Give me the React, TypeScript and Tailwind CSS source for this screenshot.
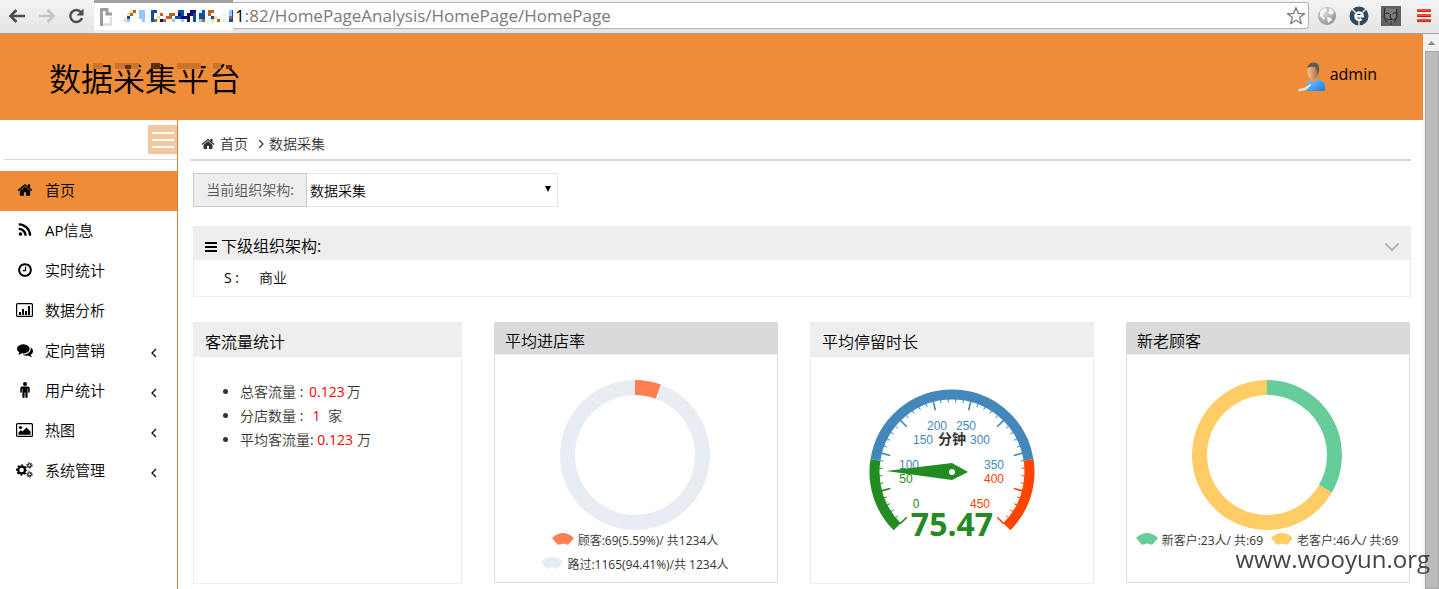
import type { ReactNode } from "react";

const HOME =
  "M1472 992v480q0 26-19 45t-45 19h-384v-384h-256v384h-384q-26 0-45-19t-19-45v-480q0-1 .5-3t.5-3l575-474 575 474q1 2 1 6zm223-69l-62 74q-8 9-21 11h-3q-13 0-21-7l-692-577-692 577q-12 8-24 7-13-2-21-11l-62-74q-8-10-7-23.5t11-21.5l719-599q32-26 76-26t76 26l244 204v-195q0-14 9-23t23-9h192q14 0 23 9t9 23v408l219 182q10 8 11 21.5t-7 23.5z";
const RSS =
  "M576 1344q0 80-56 136t-136 56-136-56-56-136 56-136 136-56 136 56 56 136zm512 123q2 28-17 48-18 21-47 21h-135q-25 0-43-16.5t-20-41.5q-22-229-184.5-391.5t-391.5-184.5q-25-2-41.5-20t-16.5-43v-135q0-29 21-47 17-17 43-17h5q160 13 306 80.5t259 181.5q114 113 181.5 259t80.5 306zm512 2q2 27-18 47-18 20-46 20h-143q-26 0-44.5-17.5t-19.5-42.5q-12-215-101-408.5t-231.5-336-336-231.5-408.5-102q-25-1-42.5-19.5t-17.5-43.5v-143q0-28 20-46 18-18 44-18h3q262 13 501.5 120t425.5 294q187 186 294 425.5t120 501.5z";
const CLOCK =
  "M1024 544v448q0 14-9 23t-23 9h-320q-14 0-23-9t-9-23v-64q0-14 9-23t23-9h224v-352q0-14 9-23t23-9h64q14 0 23 9t9 23zm416 352q0-148-73-273t-198-198-273-73-273 73-198 198-73 273 73 273 198 198 273 73 273-73 198-198 73-273zm224 0q0 209-103 385.5t-279.5 279.5-385.5 103-385.5-103-279.5-279.5-103-385.5 103-385.5 279.5-279.5 385.5-103 385.5 103 279.5 279.5 103 385.5z";
const COMMENTS =
  "M1408 768q0 139-94 257t-256.5 186.5-353.5 68.5q-86 0-176-16-124 88-278 128-36 9-86 16h-3q-11 0-20.5-8t-11.5-21q-1-3-1-6.5t.5-6.5 2-6l2.5-5 3.5-5.5 4-5 4.5-5 4-4.5q5-6 23-25t26-29.5 22.5-29 25-38.5 20.5-44q-124-72-195-177t-71-224q0-139 94-257t256.5-186.5 353.5-68.5 353.5 68.5 256.5 186.5 94 257zm384 256q0 120-71 224.5t-195 176.5q10 24 20.5 44t25 38.5 22.5 29 26 29.5 23 25q1 1 4 4.5t4.5 5 4 5 3.5 5.5l2.5 5 2 6 .5 6.5-1 6.5q-3 14-13 22t-22 7q-50-7-86-16-154-40-278-128-90 16-176 16-271 0-472-132 58 4 88 4 161 0 309-45t264-129q125-92 192-212t67-254q0-77-23-152 129 71 204 178t75 230z";

function Glyph({ d, className }: { d: string; className: string }) {
  return (
    <svg viewBox="0 0 1792 1792" fill="currentColor" className={className} aria-hidden="true">
      <path d={d} />
    </svg>
  );
}

function BarChart() {
  return (
    <svg viewBox="0 0 17 14" className="h-3.5 w-[17px]" aria-hidden="true">
      <rect x="0.6" y="0.6" width="15.8" height="12.8" rx="1" fill="none" stroke="currentColor" strokeWidth="1.2" />
      <path d="M3 9h2v3H3zM6 6h2v6H6zM9 8h2v4H9zM12 3h2v9h-2z" fill="currentColor" />
    </svg>
  );
}

function Picture() {
  return (
    <svg viewBox="0 0 17 14" className="h-3.5 w-[17px]" aria-hidden="true">
      <rect x="0.6" y="0.6" width="15.8" height="12.8" rx="1" fill="none" stroke="currentColor" strokeWidth="1.2" />
      <circle cx="4.5" cy="4.5" r="1.6" fill="currentColor" />
      <path d="M2.500 11.800V9.500L5 7l1.500 1.500L10.500 4.500l4 4v3.300z" fill="currentColor" />
    </svg>
  );
}

function Person() {
  return (
    <svg viewBox="0 0 10 16" className="h-4 w-2.5" fill="currentColor" aria-hidden="true">
      <circle cx="5" cy="2.1" r="2" />
      <path d="M2 4.6h6A1.7 1.7 0 0 1 9.7 6.3v3.6a.8.8 0 0 1-1.6 0V6.8h-.5v8.1a.9.9 0 0 1-2.2 0v-4.4h-.8v4.4a.9.9 0 0 1-2.2 0V6.8h-.5v3.1a.8.8 0 0 1-1.6 0V6.3A1.7 1.7 0 0 1 2 4.6z" />
    </svg>
  );
}

function Cogs() {
  return (
    <svg viewBox="0 0 17 16" className="h-4 w-[17px]" fill="none" stroke="currentColor" aria-hidden="true">
      <circle cx="5.6" cy="8" r="3.400" strokeWidth="2.200" />
      <circle cx="5.6" cy="8" r="4.900" strokeWidth="1.500" strokeDasharray="2 1.850" strokeDashoffset="1" />
      <circle cx="13.500" cy="3.400" r="1.700" strokeWidth="1.100" />
      <circle cx="13.500" cy="3.400" r="2.700" strokeWidth="1" strokeDasharray="1.400 1.430" />
      <circle cx="13.500" cy="12.400" r="1.700" strokeWidth="1.100" />
      <circle cx="13.500" cy="12.400" r="2.700" strokeWidth="1" strokeDasharray="1.400 1.430" />
    </svg>
  );
}

type Item = { label: string; icon: ReactNode; active?: boolean; nested?: boolean };

const MENU: Item[] = [
  { label: "首页", icon: <Glyph d={HOME} className="size-4" />, active: true },
  { label: "AP信息", icon: <Glyph d={RSS} className="size-4" /> },
  { label: "实时统计", icon: <Glyph d={CLOCK} className="size-4" /> },
  { label: "数据分析", icon: <BarChart /> },
  { label: "定向营销", icon: <Glyph d={COMMENTS} className="size-4" />, nested: true },
  { label: "用户统计", icon: <Person />, nested: true },
  { label: "热图", icon: <Picture />, nested: true },
  { label: "系统管理", icon: <Cogs />, nested: true },
];

const MOSAIC_COLORS = ["#fff", "#0a4fa3", "#8fc9ff", "#b5651d", "#10106a", "#d5f8ff", "#f5d9a8", "#3b8fd6"];
const MOSAIC = [
  "0063022001100000001100440510330000021",
  "0630022001003003304104410110300005021",
  "0100022001060033011444010110016000031",
  "6200002001304300200204010230060305011",
];

function Mosaic() {
  return (
    <svg viewBox="0 0 111 12" className="mb-0.5 h-3 w-[111px] shrink-0" shapeRendering="crispEdges" aria-hidden="true">
      {MOSAIC.flatMap((row, y) =>
        row.split("").map((c, x) => (
          <rect key={`${x}-${y}`} x={x * 3} y={y * 3} width="3" height="3" fill={MOSAIC_COLORS[Number(c)]} />
        )),
      )}
    </svg>
  );
}

function BrowserBar() {
  return (
    <div className="flex h-[34px] items-center border-b border-[#a3a3a3] bg-gradient-to-b from-[#f4f4f4] to-[#e4e4e4] pl-2">
      <button aria-label="Back" className="flex h-full w-[30px] items-center pb-0.5">
        <svg viewBox="0 0 18 16" className="h-4 w-[18px]" fill="none" stroke="#4d4d4d" strokeWidth="2.6">
          <path d="M17 8H3M8.5 2L2.5 8l6 6" />
        </svg>
      </button>
      <button aria-label="Forward" className="flex h-full w-[30px] items-center pb-0.5">
        <svg viewBox="0 0 18 16" className="h-4 w-[18px]" fill="none" stroke="#c4c4c4" strokeWidth="2.6">
          <path d="M1 8h14M9.5 2l6 6-6 6" />
        </svg>
      </button>
      <button aria-label="Reload" className="flex h-full w-[26px] items-center pb-0.5">
        <svg viewBox="0 0 16 16" className="size-4" fill="none" stroke="#4d4d4d" strokeWidth="2.4">
          <path d="M13 4.2A6 6 0 1 0 14 10" />
          <path d="M15.500 0.500v7h-7z" fill="#4d4d4d" stroke="none" />
        </svg>
      </button>
      <div className="flex h-full w-[139px] shrink-0 items-center gap-3 border-b-[3px] border-t-[3px] border-b-[#efefef] border-t-[#a0a0a0] bg-white pl-1.5">
        <svg viewBox="0 0 12 18" className="h-[18px] w-3 shrink-0" fill="none" aria-hidden="true">
          <path d="M1.500 18V1.500H7V6h5" stroke="#9c9c9c" strokeWidth="3" />
          <path d="M3 16.500h8V9" stroke="#dedede" strokeWidth="2.500" />
        </svg>
        <Mosaic />
      </div>
      <div className="mb-0.5 flex h-[27px] min-w-0 flex-1 items-center rounded-r-[3px] border border-l-0 border-[#b3b3b3] bg-white pr-0.5">
        <span className="min-w-0 flex-1 truncate pl-0.5 text-[17px] leading-6 text-[#7a7a7a]">
          <span className="text-black">1</span>:82/HomePageAnalysis/HomePage/HomePage
        </span>
        <button aria-label="Bookmark">
          <svg viewBox="0 0 20 20" className="size-5" fill="none" stroke="#7d7d7d" strokeWidth="1.300" strokeLinejoin="round">
            <path d="M10 1.500l2.300 6 6.200.2-4.900 3.900 1.800 6.200L10 14.300l-5.400 3.500 1.800-6.200L1.500 7.700l6.200-.2z" />
          </svg>
        </button>
      </div>
      <div className="mb-0.5 flex shrink-0 items-center gap-3 px-2">
        <svg viewBox="0 0 20 20" className="size-5" aria-hidden="true">
          <defs>
            <radialGradient id="globe" cx="0.35" cy="0.3" r="0.8">
              <stop offset="0" stopColor="#d8d8d8" />
              <stop offset="1" stopColor="#8e8e8e" />
            </radialGradient>
          </defs>
          <circle cx="10" cy="10" r="9" fill="url(#globe)" />
          <path d="M3 6q3-4 6-4l1 3-3 2-1 3 2 2-1 2-4-4zM12 2q4 1 5 5l-3 2-3-2 1-2zM10 11l4 1 1 2-4 3z" fill="#f4f4f4" />
        </svg>
        <svg viewBox="0 0 20 20" className="size-5" aria-hidden="true">
          <circle cx="10" cy="10" r="9.500" fill="#2d4a5e" />
          <path d="M6.300 10.200h7.400a3.700 3.700 0 1 0-1.200 2.800" fill="none" stroke="#fff" strokeWidth="2.400" />
          <path d="M3 3l3.500 3.500M17 3l-3.500 3.500M10 15v5" stroke="#fff" strokeWidth="1.200" />
        </svg>
        <svg viewBox="0 0 20 20" className="size-5" aria-hidden="true">
          <path d="M0 0h20v20H0z" fill="#626262" />
          <path d="M4 2q-1 9 6 17 6-7 5-16" fill="#7c7c7c" />
          <path d="M4.500 7.500q2-1.500 4 .5M11.500 8q2-2 4-1M9.500 8l-.5 4 2 .5M5.500 12q1.500 3 4.500 1.500 3 1.500 4.500-1.500M10 15v4M4 2L3 11l3 5M15.500 3l.5 8-3 5" fill="none" stroke="#252525" strokeWidth="1" />
        </svg>
        <button aria-label="Menu" className="ml-1">
          <svg viewBox="0 0 14 14" className="size-3.5" aria-hidden="true">
            <path d="M0 0h14v3H0zM0 5h14v3H0zM0 10h14v3H0z" fill="#ee4b40" />
            <path d="M0 2h14v1H0zM0 7h14v1H0zM0 12h14v1H0z" fill="#c9211a" />
          </svg>
        </button>
      </div>
    </div>
  );
}

function Avatar() {
  return (
    <svg viewBox="0 0 28 30" className="h-[30px] w-7" aria-hidden="true">
      <defs>
        <linearGradient id="shirt" x1="0" y1="0" x2="1" y2="1">
          <stop offset="0" stopColor="#8cc4f2" />
          <stop offset="0.600" stopColor="#3f9cf5" />
          <stop offset="1" stopColor="#1479e8" />
        </linearGradient>
        <linearGradient id="skin">
          <stop offset="0" stopColor="#f6c79c" />
          <stop offset="1" stopColor="#a8693a" />
        </linearGradient>
      </defs>
      <path d="M8 29q-1-8 5-12h7q8 2 7 10 0 2-3 2z" fill="url(#shirt)" />
      <path d="M12 15h7v3l-3 3-4-3z" fill="#d99a65" />
      <ellipse cx="15" cy="9.500" rx="5.500" ry="8" fill="url(#skin)" />
      <path d="M9.500 6q1-6 7-5.500Q22 1 21 9.500L19.500 13q0-5-2.500-8-4-1-7.500 1z" fill="#5b5b55" />
      <path d="M0 27l6-1 6-4 1.500 1L8 28l-7 1.500z" fill="#dbe4ee" />
    </svg>
  );
}

function polar(cx: number, cy: number, r: number, deg: number) {
  const a = (deg * Math.PI) / 180;
  return [cx + r * Math.sin(a), cy - r * Math.cos(a)];
}

function arc(cx: number, cy: number, r: number, from: number, to: number) {
  const [x1, y1] = polar(cx, cy, r, from);
  const [x2, y2] = polar(cx, cy, r, to);
  return `M${x1} ${y1}A${r} ${r} 0 ${to - from > 180 ? 1 : 0} 1 ${x2} ${y2}`;
}

function Donut({ share, color, rest }: { share: number; color: string; rest: string }) {
  return (
    <svg viewBox="0 0 150 150" className="size-[150px]" fill="none" strokeWidth="15" role="img">
      <path d={arc(75, 75, 67.5, share * 360, 360)} stroke={rest} />
      <path d={arc(75, 75, 67.5, 0, share * 360)} stroke={color} />
    </svg>
  );
}

function Legend({ color, children }: { color: string; children: ReactNode }) {
  return (
    <div className="flex h-6 items-center gap-1 whitespace-nowrap pb-0.5 text-xs text-[#333]">
      <svg viewBox="0 0 22 12" className="mb-1 h-3 w-[22px] shrink-0" aria-hidden="true">
        <path d="M0 5Q11-5 22 5l-6 7q-1-1-2.500-.5-2.500-2-5 0Q7 11 6 12z" fill={color} />
      </svg>
      <span>{children}</span>
    </div>
  );
}

const BLUE = "#4488bb";
const GREEN = "#228b22";
const RED = "#ff4500";

const DIAL_LABELS = [
  { v: "0", x: 47, y: 119, c: GREEN },
  { v: "50", x: 37, y: 94, c: GREEN },
  { v: "100", x: 40, y: 80, c: BLUE },
  { v: "150", x: 54, y: 55, c: BLUE },
  { v: "200", x: 68, y: 41, c: BLUE },
  { v: "250", x: 97, y: 41, c: BLUE },
  { v: "300", x: 111, y: 55, c: BLUE },
  { v: "350", x: 125, y: 80, c: BLUE },
  { v: "400", x: 125, y: 94, c: RED },
  { v: "450", x: 111, y: 119, c: RED },
];

function Gauge() {
  const cx = 83;
  const cy = 83;
  const zone = (v: number) => (v < 90 ? GREEN : v <= 360 ? BLUE : RED);
  const ticks = Array.from({ length: 46 }, (_, i) => i);
  return (
    <svg viewBox="0 0 166 170" className="h-[170px] w-[166px]" role="img" aria-label="75.47">
      <g fill="none" strokeWidth="10">
        <path d={arc(cx, cy, 77.5, -135, -81)} stroke={GREEN} />
        <path d={arc(cx, cy, 77.5, -81, 81)} stroke={BLUE} />
        <path d={arc(cx, cy, 77.5, 81, 135)} stroke={RED} />
      </g>
      {ticks.map((i) => {
        const deg = -135 + i * 6;
        const [x1, y1] = polar(cx, cy, 73, deg);
        const [x2, y2] = polar(cx, cy, i % 5 === 0 ? 64 : 69.5, deg);
        return <path key={i} d={`M${x1} ${y1}L${x2} ${y2}`} stroke={zone(i * 10)} strokeWidth={i % 5 === 0 ? 1.6 : 1} />;
      })}
      {DIAL_LABELS.map((l) => (
        <text key={l.v} x={l.x} y={l.y} fill={l.c} textAnchor="middle" className="font-['Liberation_Sans'] text-xs">
          {l.v}
        </text>
      ))}
      <text x="83" y="55" textAnchor="middle" fill="#333" className="font-['Noto_Sans_CJK_SC'] text-sm font-bold">
        分钟
      </text>
      <path d="M17 82l66-8 16 9-16 8z" fill={GREEN} />
      <circle cx="83" cy="83" r="3" fill="#fff" />
      <text x="83" y="147" textAnchor="middle" fill={GREEN} className="text-[32px] font-bold">
        75.47
      </text>
    </svg>
  );
}

function ChartCard({ title, dark, children }: { title: string; dark?: boolean; children: ReactNode }) {
  return (
    <section className={dark ? "flex min-h-[261px] flex-col border border-[#dadada]" : "flex min-h-[262px] flex-col border border-[#eee]"}>
      <h2
        className={
          dark
            ? "flex h-8 items-center border-b border-[#eee] bg-[#dadada] px-2.5 pt-1 text-base text-black"
            : "flex h-[34px] items-center bg-[#eee] px-[11px] pt-1 text-base text-black"
        }
      >
        {title}
      </h2>
      {children}
    </section>
  );
}

export default function App() {
  return (
    <div className="flex h-screen flex-col overflow-hidden bg-white font-['Open_Sans','Noto_Sans_CJK_SC_DemiLight','Noto_Sans_CJK_SC',sans-serif] text-sm text-[#333]">
      <BrowserBar />
      <div className="flex min-h-0 flex-1">
        <div className="flex min-w-0 flex-1 flex-col">
          <header className="flex h-[86px] shrink-0 items-center justify-between bg-[#ee8c37] pl-[49px] pr-[46px] text-black">
            <h1 className="relative pt-1 text-[32px] leading-10">
              数据采集平台
              <svg viewBox="0 0 144 8" className="absolute left-10 top-2 h-2 w-36" shapeRendering="crispEdges" aria-hidden="true">
                <path d="M4 0h10v6H4zM26 0h24v6H26zM88 0h24v6H88zM124 0h8v6h-8z" fill="#c97530" />
                <path d="M62 0h9v6h-9zM36 2h6v4h-6zM137 2h6v4h-6z" fill="#5c3010" />
              </svg>
            </h1>
            <div className="flex items-center gap-1 text-base">
              <Avatar />
              <span className="pb-1.5">admin</span>
            </div>
          </header>
          <div className="flex min-h-0 flex-1">
            <nav className="w-[178px] shrink-0 border-r border-[#d9803c] text-[15px] text-black">
              <div className="ml-1 mb-[11px] flex h-10 items-start justify-end border-b border-[#dadada] pt-[5px]">
                <button aria-label="Toggle menu" className="flex h-[29px] w-[29px] flex-col items-end justify-center gap-[5px] bg-[#f4c89e] pr-[3px]">
                  <span className="h-0.5 w-[22px] bg-white" />
                  <span className="h-0.5 w-[22px] bg-white" />
                  <span className="h-0.5 w-[22px] bg-white" />
                </button>
              </div>
              <ul>
                {MENU.map((m) => (
                  <li key={m.label}>
                    <a href="#" className={m.active ? "flex h-10 items-center bg-[#ee8c37] pl-3.5 pr-5" : "flex h-10 items-center pl-3.5 pr-5"}>
                      <span className="flex w-[21px] justify-center pb-0.5">{m.icon}</span>
                      <span className="flex-1 pl-2.5">{m.label}</span>
                      {m.nested && (
                        <svg viewBox="0 0 6 10" className="mt-1 h-2.5 w-1.5" fill="none" stroke="currentColor" strokeWidth="1.200" aria-hidden="true">
                          <path d="M5 1L1 5l4 4" />
                        </svg>
                      )}
                    </a>
                  </li>
                ))}
              </ul>
            </nav>
            <main className="min-w-0 flex-1 pl-3 pr-3">
              <div className="flex h-[41px] items-center border-b-2 border-[#dadada] pl-[11px] pt-2">
                <Glyph d={HOME} className="size-3.5" />
                <a href="#" className="pl-[5px]">
                  首页
                </a>
                <svg viewBox="0 0 6 10" className="ml-2.5 mr-[5px] h-2.5 w-1.5" fill="none" stroke="currentColor" strokeWidth="1.200" aria-hidden="true">
                  <path d="M1 1l4 4-4 4" />
                </svg>
                <span>数据采集</span>
              </div>
              <div className="pl-[3px]">
                <div className="mt-3 flex h-[34px] w-[365px]">
                  <label htmlFor="org" className="flex w-[114px] items-center justify-center border border-[#ccc] bg-[#eee] text-[#555]">
                    当前组织架构:
                  </label>
                  <div className="relative flex-1">
                    <select id="org" className="size-full appearance-none border border-l-0 border-[#e5e5e5] bg-white pl-[3px] pt-0.5 text-sm text-black">
                      <option>数据采集</option>
                    </select>
                    <svg viewBox="0 0 6 6" className="pointer-events-none absolute right-[7px] top-[13px] size-1.5" aria-hidden="true">
                      <path d="M0 0h6L3 6z" />
                    </svg>
                  </div>
                </div>
                <section className="mt-[19px] border border-[#eee] text-black">
                  <div className="flex h-[33px] items-center bg-[#eee] pl-[11px] pr-[11px] pt-1">
                    <svg viewBox="0 0 12 10" className="mt-0.5 h-2.5 w-3" aria-hidden="true">
                      <path d="M0 0h12v2H0zM0 4h12v2H0zM0 8h12v2H0z" />
                    </svg>
                    <h2 className="flex-1 pl-1 text-base">下级组织架构:</h2>
                    <svg viewBox="0 0 14 8" className="mt-0.5 h-2 w-3.5" fill="none" stroke="#aaa" strokeWidth="1.600" aria-hidden="true">
                      <path d="M0.500 0.500L7 7l6.500-6.500" />
                    </svg>
                  </div>
                  <div className="flex h-9 items-center gap-5 pl-[30px]">
                    <span>S :</span>
                    <a href="#">商业</a>
                  </div>
                </section>
                <div className="mr-px mt-[25px] grid grid-cols-[269fr_284fr_284fr_284fr] items-start gap-8">
                  <ChartCard title="客流量统计">
                    <ul className="list-disc pl-[46px] pt-[23px] leading-6">
                      <li>
                        总客流量 : <span className="pl-0.5 text-[#f00]">0.123</span>
                        <span className="pl-0.5">万</span>
                      </li>
                      <li>
                        分店数量 : &nbsp;<span className="pl-0.5 text-[#f00]">1</span>&nbsp; 家
                      </li>
                      <li>
                        平均客流量: <span className="text-[#f00]">0.123</span>
                        <span className="pl-1">万</span>
                      </li>
                    </ul>
                  </ChartCard>
                  <ChartCard title="平均进店率" dark>
                    <div className="flex flex-col items-center pr-0.5 pt-[25px]">
                      <Donut share={0.0559} color="#ff7f50" rest="#e8edf4" />
                      <Legend color="#ff7f50">顾客:69(5.59%)/ 共1234人</Legend>
                      <Legend color="#e8edf4">路过:1165(94.41%)/共 1234人</Legend>
                    </div>
                  </ChartCard>
                  <ChartCard title="平均停留时长">
                    <div className="flex justify-center pt-8">
                      <Gauge />
                    </div>
                  </ChartCard>
                  <ChartCard title="新老顾客" dark>
                    <div className="flex flex-col items-center pr-0.5 pt-[25px]">
                      <Donut share={1 / 3} color="#66cc99" rest="#ffcc66" />
                      <div className="flex gap-2">
                        <Legend color="#66cc99">新客户:23人/ 共:69</Legend>
                        <Legend color="#ffcc66">老客户:46人/ 共:69</Legend>
                      </div>
                    </div>
                  </ChartCard>
                </div>
              </div>
            </main>
          </div>
        </div>
        <div className="flex w-4 shrink-0 flex-col border-l border-[#f5f5f5] bg-[#f1f1f1]">
          <svg viewBox="0 0 15 17" className="h-[17px] w-[15px]" aria-hidden="true">
            <path d="M3.500 11l4-4 4 4z" fill="#8d8d8d" />
          </svg>
          <div className="ml-px flex-1 border border-[#a6a6a6] bg-[#bcbcbc]" />
        </div>
      </div>
      <div className="fixed bottom-3.5 right-[9px] text-2xl leading-8 text-[#444]">www.wooyun.org</div>
    </div>
  );
}
